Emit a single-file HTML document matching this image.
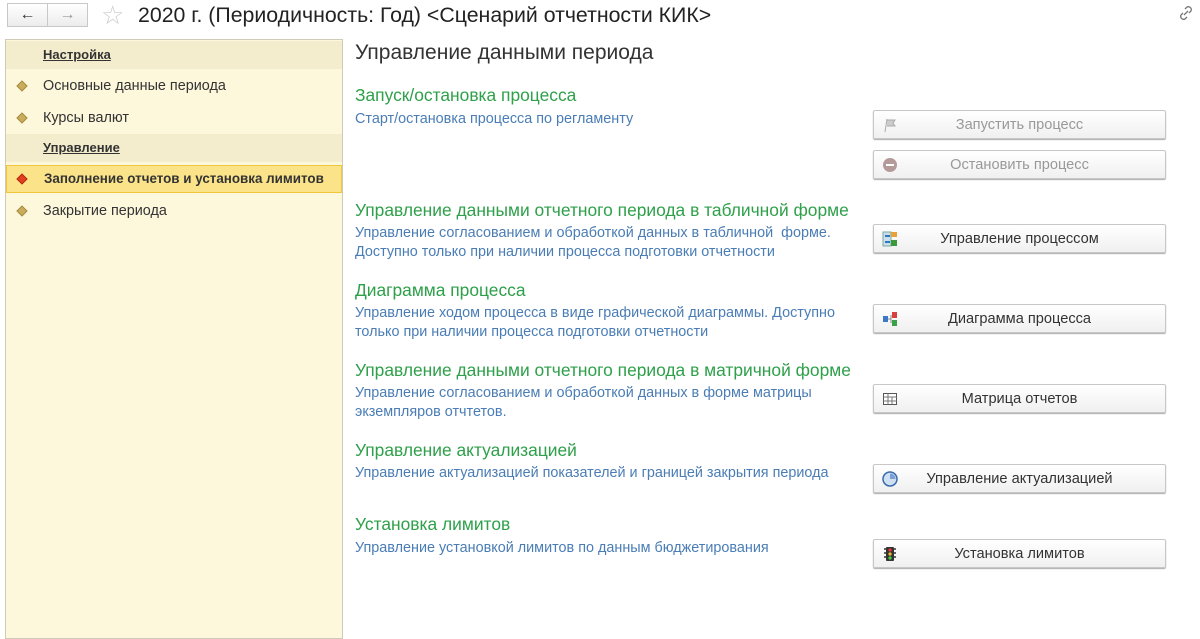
<!DOCTYPE html>
<html><head><meta charset="utf-8"><style>
*{margin:0;padding:0;box-sizing:border-box}
body{width:1200px;height:630px;background:#fff;font-family:"Liberation Sans",Arial,sans-serif;position:relative;overflow:hidden}
.a{position:absolute;white-space:nowrap}
.nav{position:absolute;top:3px;height:24px;width:41px;border:1px solid #c8c8c8;background:linear-gradient(#fff,#ececec);font-size:16px;text-align:center;line-height:21px;color:#333}
.side{position:absolute;left:5px;top:39px;width:338px;height:600px;background:#fdf7dc;border:1px solid #cfcbb8}
.grp{position:absolute;left:0;width:336px;height:28px;background:#f4edcd;font-size:13px;font-weight:bold;line-height:28px;padding-left:37px;color:#333}
.grp span{text-decoration:underline}
.it{position:absolute;left:0;width:336px;height:28px;font-size:14.4px;line-height:28px;padding-left:37px;color:#333}
.dm{position:absolute;left:12px;top:10px;width:8px;height:8px;background:#c9ad5c;transform:rotate(45deg);border:1px solid #a58c40}
.h{font-size:17.4px;color:#2ea04a}
.d{font-size:14.4px;color:#4a7db5;line-height:19px}
.b{position:absolute;left:873px;width:293px;height:29px;border:1px solid #c7c7c7;border-radius:2px;background:linear-gradient(#fff,#f0f0f0);box-shadow:0 1px 1px #aaa;font-size:14.6px;color:#333;text-align:center;line-height:29px}
.b.dis{color:#999}
.ic{position:absolute;left:8px;top:6px;width:16px;height:16px}
</style></head><body>
<div class="nav" style="left:7px">&#8592;</div>
<div class="nav" style="left:47px;color:#999">&#8594;</div>
<div class="a" style="left:101px;top:0;font-size:26px;color:#ccc">&#9734;</div>
<div class="a" style="left:138px;top:3px;font-size:21.3px;color:#222">2020 г. (Периодичность: Год) &lt;Сценарий отчетности КИК&gt;</div>
<svg class="a" style="left:1178px;top:5px" width="16" height="16" viewBox="0 0 16 16"><path d="M7 4l2-2a3 3 0 014 4l-2 2M9 12l-2 2a3 3 0 01-4-4l2-2M6 10l4-4" stroke="#777" stroke-width="1.3" fill="none"/></svg>

<div class="side">
<div class="grp" style="top:1px"><span>Настройка</span></div>
<div class="it" style="top:32px"><i class="dm"></i>Основные данные периода</div>
<div class="it" style="top:64px"><i class="dm"></i>Курсы валют</div>
<div class="grp" style="top:94px"><span>Управление</span></div>
<div class="it" style="top:125px;height:28px;background:#fbe38a;border:1px solid #f0c63a;font-weight:bold;font-size:13.4px;line-height:26px"><i class="dm" style="background:#e0401e;border-color:#b52a10;top:9px;left:11px"></i>Заполнение отчетов и установка лимитов</div>
<div class="it" style="top:157px"><i class="dm"></i>Закрытие периода</div>
</div>

<div class="a" style="left:355px;top:41px;font-size:21px;color:#333">Управление данными периода</div>

<div class="a h" style="left:355px;top:85px">Запуск/остановка процесса</div>
<div class="a d" style="left:355px;top:110px">Старт/остановка процесса по регламенту</div>
<div class="a h" style="left:355px;top:200px">Управление данными отчетного периода в табличной форме</div>
<div class="a d" style="left:355px;top:224px">Управление согласованием и обработкой данных в табличной&nbsp; форме.<br>Доступно только при наличии процесса подготовки отчетности</div>
<div class="a h" style="left:355px;top:280px">Диаграмма процесса</div>
<div class="a d" style="left:355px;top:304px">Управление ходом процесса в виде графической диаграммы. Доступно<br>только при наличии процесса подготовки отчетности</div>
<div class="a h" style="left:355px;top:360px">Управление данными отчетного периода в матричной форме</div>
<div class="a d" style="left:355px;top:384px">Управление согласованием и обработкой данных в форме матрицы<br>экземпляров отчтетов.</div>
<div class="a h" style="left:355px;top:440px">Управление актуализацией</div>
<div class="a d" style="left:355px;top:464px">Управление актуализацией показателей и границей закрытия периода</div>
<div class="a h" style="left:355px;top:514px">Установка лимитов</div>
<div class="a d" style="left:355px;top:539px">Управление установкой лимитов по данным бюджетирования</div>

<div class="b dis" style="top:110px"><svg class="ic" viewBox="0 0 16 16"><path d="M3 15L5 2M5 3h8l-2 3 2 3H5" stroke="#aaa" fill="#ccc"/></svg>Запустить процесс</div>
<div class="b dis" style="top:150px"><svg class="ic" viewBox="0 0 16 16"><circle cx="8" cy="8" r="7" fill="#b59a9a"/><rect x="4" y="7" width="8" height="2" fill="#fff"/></svg>Остановить процесс</div>
<div class="b" style="top:224px"><svg class="ic" viewBox="0 0 16 16"><rect x="1" y="1" width="8" height="14" fill="#cde" stroke="#7a9"/><rect x="9" y="1" width="6" height="5" fill="#e9a23b"/><rect x="9" y="9" width="6" height="6" fill="#3a9a3a"/><path d="M3 5h5M3 11h5" stroke="#2a7ac0" stroke-width="2"/></svg>Управление процессом</div>
<div class="b" style="top:304px"><svg class="ic" viewBox="0 0 16 16"><rect x="1" y="5" width="5" height="6" fill="#3a78c8"/><path d="M6 8h3M9 4v8" stroke="#888"/><rect x="10" y="1" width="5" height="6" fill="#d84040"/><rect x="10" y="9" width="5" height="6" fill="#3aa04a"/></svg>Диаграмма процесса</div>
<div class="b" style="top:384px"><svg class="ic" viewBox="0 0 16 16"><rect x="1.5" y="2.5" width="13" height="11" fill="#fff" stroke="#555"/><path d="M1.5 6h13M1.5 10h13M6 2.5v11M10 6v7.5" stroke="#777"/></svg>Матрица отчетов</div>
<div class="b" style="top:464px"><svg class="ic" viewBox="0 0 16 16"><circle cx="8" cy="8" r="7" fill="#cfe0f5" stroke="#3a6aa8" stroke-width="1.5"/><path d="M8 8V2.5A5.5 5.5 0 0113.5 8z" fill="#7aa0d8"/></svg>Управление актуализацией</div>
<div class="b" style="top:539px"><svg class="ic" viewBox="0 0 16 16"><rect x="4" y="1" width="8" height="14" rx="1" fill="#333"/><circle cx="8" cy="4" r="1.6" fill="#e33"/><circle cx="8" cy="8" r="1.6" fill="#eb3"/><circle cx="8" cy="12" r="1.6" fill="#4c4"/><path d="M2 3h2M2 7h2M2 11h2M12 3h2M12 7h2M12 11h2" stroke="#333" stroke-width="1.5"/></svg>Установка лимитов</div>
</body></html>
